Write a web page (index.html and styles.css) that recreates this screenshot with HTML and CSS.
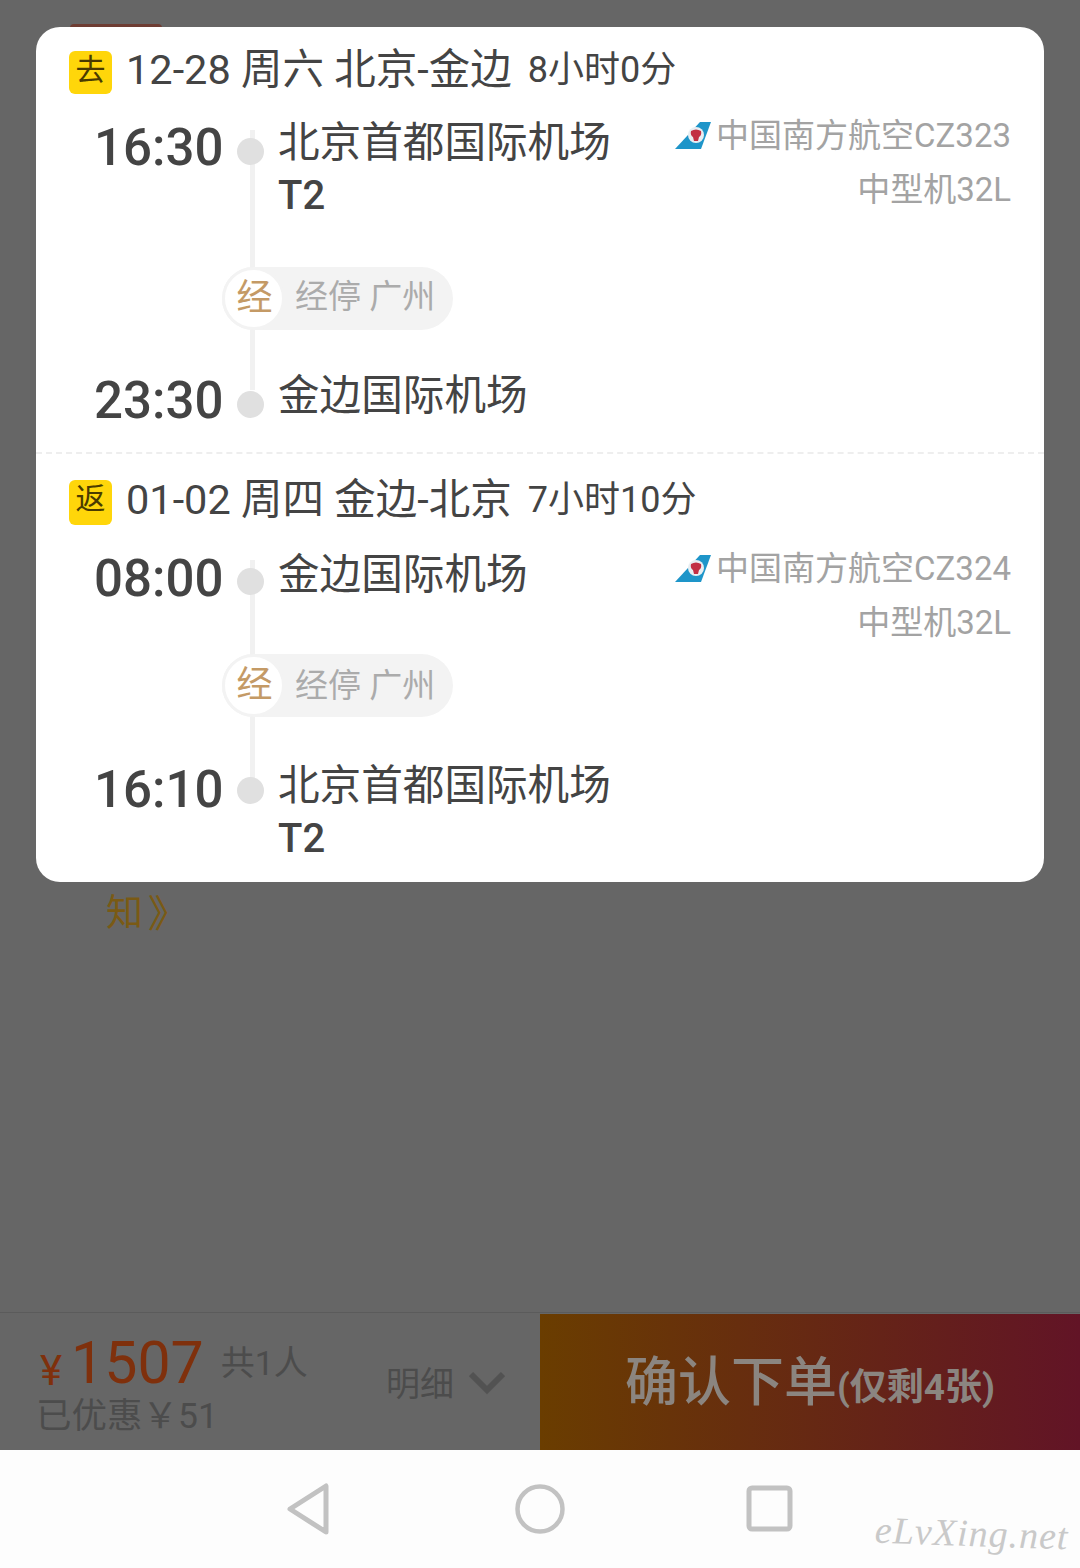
FILE: index.html
```html
<!DOCTYPE html>
<html lang="zh-CN">
<head>
<meta charset="utf-8">
<title>确认订单</title>
<link rel="stylesheet" href="styles.css">
</head>
<body>
<div class="page">

  <div class="behind">
    <div class="behind_tag"></div>
    <div class="notice">知<span class="notice_arrow">》</span></div>
  </div>

  <div class="foot">
    <div class="foot_left">
      <div class="price">
        <div class="price_top">
          <span class="yen">¥</span><span class="amount">1507</span><span class="people">共1人</span>
        </div>
        <div class="saved">已优惠￥51</div>
      </div>
      <div class="detail">
        <span>明细</span>
        <svg class="chevron" width="36" height="24" viewBox="0 0 36 24"><path d="M2 3 L18 19 L34 3" fill="none" stroke="#525252" stroke-width="6"/></svg>
      </div>
    </div>
    <div class="submit">确认下单<span class="submit_small">(仅剩4张)</span></div>
  </div>

  <div class="nav">
    <svg width="50" height="52" viewBox="0 0 50 52"><path d="M5 26 L41 3 V49 Z" fill="none" stroke="#c2c2c2" stroke-width="5" stroke-linejoin="round"/></svg>
    <svg width="50" height="52" viewBox="0 0 50 52"><circle cx="25" cy="26" r="22.5" fill="none" stroke="#c2c2c2" stroke-width="4.5"/></svg>
    <svg width="50" height="52" viewBox="0 0 50 52"><rect x="4" y="5" width="41" height="41" rx="3" fill="none" stroke="#c2c2c2" stroke-width="5"/></svg>
    <div class="watermark">eLvXing.net</div>
  </div>

  <div class="modal">

    <div class="leg leg_go">
      <div class="leg_head">
        <span class="badge">去</span>
        <span class="leg_title">12-28 周六 北京-金边</span>
        <span class="leg_time">8小时0分</span>
      </div>
      <div class="route">
        <div class="line"></div>
        <div class="row">
          <div class="time">16:30</div>
          <div class="dot"></div>
          <div class="name">北京首都国际机场<br><b>T2</b></div>
          <div class="carrier">
            <div class="carrier_line">
              <svg class="tail" width="36" height="28" viewBox="0 0 36 28"><polygon points="25,0 36,0 26,27 0,27" fill="#1e95c9"/><circle cx="21" cy="13" r="8" fill="#e8eef2"/><path d="M16 9 Q21 6 26 9 Q27 13 24 15 L23 19 H19 L18 15 Q15 13 16 9 Z" fill="#c22f44"/></svg>
              <span>中国南方航空CZ323</span>
            </div>
            <div>中型机32L</div>
          </div>
        </div>
        <div class="stop">
          <span class="stop_icon">经</span>
          <span class="stop_text">经停 广州</span>
        </div>
        <div class="row row_end">
          <div class="time">23:30</div>
          <div class="dot"></div>
          <div class="name">金边国际机场</div>
        </div>
      </div>
    </div>

    <div class="leg leg_back">
      <div class="leg_head">
        <span class="badge">返</span>
        <span class="leg_title">01-02 周四 金边-北京</span>
        <span class="leg_time">7小时10分</span>
      </div>
      <div class="route">
        <div class="line"></div>
        <div class="row">
          <div class="time">08:00</div>
          <div class="dot"></div>
          <div class="name">金边国际机场</div>
          <div class="carrier">
            <div class="carrier_line">
              <svg class="tail" width="36" height="28" viewBox="0 0 36 28"><polygon points="25,0 36,0 26,27 0,27" fill="#1e95c9"/><circle cx="21" cy="13" r="8" fill="#e8eef2"/><path d="M16 9 Q21 6 26 9 Q27 13 24 15 L23 19 H19 L18 15 Q15 13 16 9 Z" fill="#c22f44"/></svg>
              <span>中国南方航空CZ324</span>
            </div>
            <div>中型机32L</div>
          </div>
        </div>
        <div class="stop">
          <span class="stop_icon">经</span>
          <span class="stop_text">经停 广州</span>
        </div>
        <div class="row row_end">
          <div class="time">16:10</div>
          <div class="dot"></div>
          <div class="name">北京首都国际机场<br><b>T2</b></div>
        </div>
      </div>
    </div>

  </div>
</div>
</body>
</html>
```

FILE: styles.css
```css
*
{
box-sizing: border-box;
}

body
{
margin: 0;
font-family: Roboto, "Noto Sans CJK SC", sans-serif;
}

.page
{
position: relative;
width: 1080px;
height: 1568px;
display: flex;
flex-direction: column;
background-color: #666;
overflow: hidden;
}

.behind
{
flex: 1;
padding-top: 24px;
padding-left: 70px;
}

.behind_tag
{
width: 92px;
height: 8px;
background-color: #6e3d33;
border-radius: 4px 4px 0 0;
}

.notice
{
display: flex;
align-items: center;
margin-top: 860px;
margin-left: 36px;
font-size: 37px;
line-height: 44px;
color: #7a5a14;
}

.notice_arrow
{
width: 27px;
margin-left: 6px;
font-size: 38px;
transform: scaleX(1.1);
}

/* bottom bar */
.foot
{
height: 138px;
display: flex;
border-top: 1px solid #5b5b5b;
}

.foot_left
{
width: 540px;
display: flex;
padding-left: 36px;
}

.price
{
width: 350px;
}

.price_top
{
height: 82px;
display: flex;
align-items: center;
padding-top: 16px;
}

.yen
{
margin-left: 4px;
margin-top: 16px;
font-size: 42px;
color: #7f300c;
}

.amount
{
margin-left: 9px;
font-size: 59px;
color: #7f300c;
}

.people
{
margin-left: 17px;
margin-top: -4px;
font-size: 34px;
color: #4c4c4c;
}

.saved
{
margin-top: -1px;
font-size: 35.5px;
line-height: 44px;
color: #4c4c4c;
}

.detail
{
display: flex;
align-items: center;
gap: 15px;
font-size: 34px;
color: #4c4c4c;
}

.chevron
{
margin-top: 3px;
}

.submit
{
flex: 1;
display: flex;
justify-content: center;
align-items: center;
margin-top: 1px;
padding-bottom: 8px;
background: linear-gradient(to right, #6a3d00, #621426);
font-size: 53px;
font-weight: 500;
color: #8b8580;
}

.submit_small
{
margin-top: 12px;
font-size: 37px;
font-weight: 700;
}

/* system nav */
.nav
{
position: relative;
height: 118px;
display: flex;
justify-content: center;
align-items: center;
gap: 180px;
background-color: #fdfdfd;
}

.watermark
{
position: absolute;
left: 875px;
top: 61px;
font-family: "Liberation Serif", serif;
font-style: italic;
font-size: 38px;
letter-spacing: 1px;
color: #c9c9c9;
transform: rotate(2deg);
}

/* flight popup */
.modal
{
position: absolute;
left: 36px;
top: 27px;
width: 1008px;
height: 855px;
background-color: #fff;
border-radius: 24px;
color: #444;
}

.leg
{
height: 427px;
}

.leg_go
{
border-bottom: 2px dashed #eee;
padding-top: 23px;
}

.leg_back
{
padding-top: 25px;
}

.leg_head
{
height: 44px;
display: flex;
align-items: center;
padding-left: 33px;
}

.badge
{
width: 43px;
height: 43px;
margin-right: 14px;
background-color: #ffd60a;
border-radius: 6px;
text-align: center;
font-size: 30px;
line-height: 38px;
color: #4a3b00;
}

.leg_back .badge
{
height: 45px;
margin-top: 2px;
}

.leg_title
{
margin-bottom: 13px;
font-size: 41.5px;
}

.leg_time
{
margin-left: 16px;
margin-bottom: 13px;
font-size: 36px;
}

.leg_back .leg_title, .leg_back .leg_time
{
margin-bottom: 11px;
}

.route
{
position: relative;
margin-top: 21px;
}

.leg_back .route
{
margin-top: 22px;
}

.line
{
position: absolute;
left: 214px;
top: 15px;
width: 5px;
height: 260px;
background-color: #f1f1f1;
}

.leg_back .line
{
height: 230px;
}

.row
{
position: relative;
height: 107px;
display: flex;
}

.row_end
{
height: auto;
margin-top: 38px;
}

.leg_back .row_end
{
margin-top: 37px;
}

.time
{
width: 127px;
margin-left: 58px;
padding-top: 4px;
font-size: 51px;
font-weight: 500;
line-height: 58px;
}

.leg_back .time
{
padding-top: 5px;
}

.leg_back .row_end .time
{
padding-top: 7px;
}

.dot
{
width: 27px;
height: 27px;
margin-top: 23px;
margin-left: 16px;
background-color: #e0e0e0;
border-radius: 50%;
}

.name
{
margin-left: 14px;
padding-top: 2px;
font-size: 41.6px;
line-height: 52px;
}

.leg_back .name
{
padding-top: 4px;
}

.leg_back .row_end .name
{
padding-top: 6px;
}

.name b
{
font-weight: 500;
font-size: 40px;
}

.carrier
{
flex: 1;
padding-right: 33px;
text-align: right;
font-size: 33px;
line-height: 54px;
color: #a3a3a3;
}

.leg_back .carrier
{
padding-top: 3px;
}

.carrier_line
{
display: flex;
justify-content: flex-end;
align-items: center;
gap: 5px;
margin-top: -6px;
}

.tail
{
margin-top: -1px;
}

.stop
{
position: relative;
width: 231px;
height: 63px;
margin-top: 45px;
margin-left: 186px;
display: flex;
align-items: center;
background-color: #f3f3f3;
border-radius: 32px;
}

.leg_back .stop
{
margin-top: 2px;
}

.stop_icon
{
width: 63px;
height: 63px;
padding-left: 2px;
background-color: #fff;
border: 3px solid #f3f3f3;
border-radius: 50%;
text-align: center;
font-size: 36px;
line-height: 57px;
color: #c49a66;
}

.stop_text
{
margin-left: 10px;
margin-bottom: 10px;
font-size: 33px;
color: #ababab;
}

.leg_back .stop_text
{
margin-bottom: 6px;
}
```
